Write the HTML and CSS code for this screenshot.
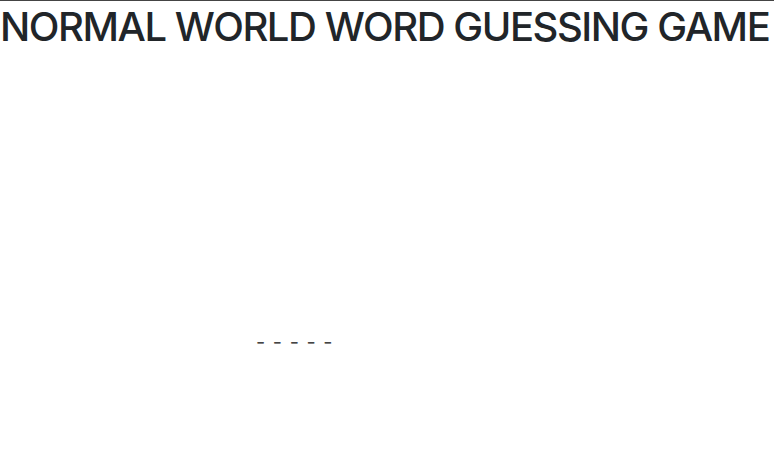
FILE: index.html
```html
<!DOCTYPE html>
<html>
<head>
<meta charset="utf-8">
<link rel="stylesheet" href="styles.css">
</head>
<body>
<div class="page">
  <h1 class="title">NORMAL WORLD WORD GUESSING GAME</h1>
  <div class="board">
    <div class="word">- - - - -</div>
  </div>
</div>
</body>
</html>
```
FILE: styles.css
```css
html, body {
  margin: 0;
  padding: 0;
  background: #ffffff;
}
.page {
  border-top: 1px solid #444444;
  font-family: Inter, "Noto Sans", sans-serif;
  color: #212529;
}
.title {
  margin: 0;
  font-size: 40px;
  font-weight: 500;
  line-height: 52px;
  letter-spacing: -1.45px;
  white-space: nowrap;
}
.board {
  padding-top: 277px;
  padding-left: 256px;
}
.word {
  font-size: 20px;
  line-height: 24px;
  color: #444;
  letter-spacing: 1px;
}
```
